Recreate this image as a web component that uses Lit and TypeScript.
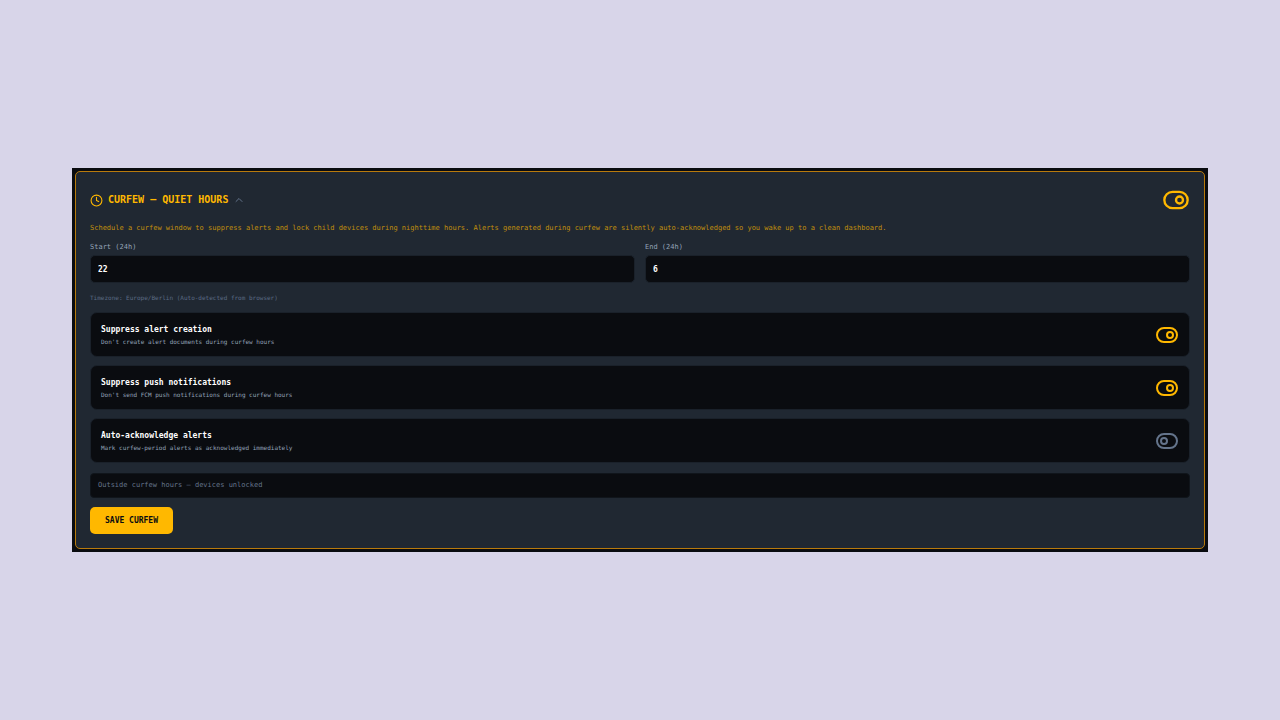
import { LitElement, html, css, svg } from "lit";
import { customElement, property, state } from "lit/decorators.js";

@customElement("toggle-switch")
class ToggleSwitch extends LitElement {
  @property({ type: Boolean, reflect: true }) on = false;
  @property() label = "";
  @property({ type: Boolean, reflect: true }) large = false;

  static styles = css`
    :host {
      display: flex;
      color: #64748b;
    }
    :host([on]) {
      color: #ffb800;
    }
    .toggle {
      display: flex;
      padding: 0;
      border: 0;
      background: none;
      color: inherit;
      cursor: pointer;
    }
    .icon {
      width: 24px;
      height: 24px;
      fill: none;
      stroke: currentColor;
      stroke-width: 2;
    }
    :host([large]) .icon {
      width: 28px;
      height: 28px;
    }
  `;

  private flip() {
    this.on = !this.on;
  }

  render() {
    return html`<button
      class="toggle"
      type="button"
      role="switch"
      aria-checked=${this.on ? "true" : "false"}
      aria-label=${this.label}
      @click=${this.flip}
    >
      <svg class="icon" viewBox="0 0 24 24" aria-hidden="true">
        <rect x="2" y="5" width="20" height="14" rx="7"></rect>
        ${svg`<circle cx=${this.on ? 15 : 9} cy="12" r="3"></circle>`}
      </svg>
    </button>`;
  }
}

interface Option {
  title: string;
  detail: string;
  on: boolean;
}

@customElement("app-root")
class AppRoot extends LitElement {
  @state() private options: Option[] = [
    {
      title: "Suppress alert creation",
      detail: "Don't create alert documents during curfew hours",
      on: true,
    },
    {
      title: "Suppress push notifications",
      detail: "Don't send FCM push notifications during curfew hours",
      on: true,
    },
    {
      title: "Auto-acknowledge alerts",
      detail: "Mark curfew-period alerts as acknowledged immediately",
      on: false,
    },
  ];

  static styles = css`
    :host {
      display: flex;
      flex-direction: column;
      justify-content: center;
      box-sizing: border-box;
      min-height: 100vh;
      padding: 0 72px;
      background: #d8d5e9;
      color: #ffffff;
      font-family: "DejaVu Sans Mono", monospace;
      font-size: 7px;
      line-height: 10px;
    }
    .frame {
      padding: 3px;
      background: #0a0c10;
    }
    .card {
      display: flex;
      flex-direction: column;
      padding: 14px;
      border: 1px solid #b87a0c;
      border-radius: 5px;
      background: #202832;
    }
    .header {
      display: flex;
      align-items: center;
      justify-content: space-between;
    }
    .heading {
      display: flex;
      align-items: center;
      gap: 5px;
      margin: 0;
      color: #ffb800;
      font-size: 10px;
      line-height: 16px;
      font-weight: 700;
    }
    .clock {
      width: 13px;
      height: 13px;
      fill: none;
      stroke: currentColor;
      stroke-width: 2;
      stroke-linecap: round;
      stroke-linejoin: round;
    }
    .chevron {
      width: 12px;
      height: 12px;
      fill: none;
      stroke: #64748b;
      stroke-width: 2;
      stroke-linecap: round;
      stroke-linejoin: round;
    }
    .intro {
      margin: 9px 0;
      color: #c08f0c;
    }
    .fields {
      display: grid;
      grid-template-columns: 1fr 1fr;
      gap: 10px;
    }
    .field {
      display: flex;
      flex-direction: column;
      gap: 3px;
      color: #94a3b8;
    }
    .input {
      box-sizing: border-box;
      width: 100%;
      height: 28px;
      padding: 0 7px;
      border: 1px solid #1a212a;
      border-radius: 5px;
      background: #0a0c10;
      color: #ffffff;
      font: inherit;
      font-size: 8px;
      font-weight: 700;
    }
    .timezone {
      margin: 10px 0 9px;
      color: #5c6b84;
      font-size: 6px;
    }
    .options {
      display: flex;
      flex-direction: column;
      gap: 8px;
    }
    .option {
      display: flex;
      align-items: center;
      justify-content: space-between;
      box-sizing: border-box;
      min-height: 45px;
      padding: 0 10px;
      border: 1px solid #1a212a;
      border-radius: 7px;
      background: #0a0c10;
    }
    .title {
      font-size: 8px;
      line-height: 14px;
      font-weight: 700;
    }
    .detail {
      color: #94a3b8;
      font-size: 6px;
    }
    .status {
      margin: 10px 0 9px;
      padding: 7px;
      border: 1px solid #10151b;
      border-radius: 4px;
      background: #0a0c10;
      color: #64748b;
      line-height: 9px;
    }
    .save {
      align-self: flex-start;
      height: 27px;
      padding: 0 15px;
      border: 0;
      border-radius: 5px;
      background: #ffb800;
      color: #0a0c10;
      font: inherit;
      font-size: 8px;
      font-weight: 700;
      cursor: pointer;
    }
  `;

  render() {
    return html`
      <main class="frame">
        <section class="card">
          <header class="header">
            <h1 class="heading">
              <svg class="clock" viewBox="0 0 24 24" aria-hidden="true">
                <circle cx="12" cy="12" r="10"></circle>
                <path d="M12 6v6l4 2"></path>
              </svg>
              <span>CURFEW — QUIET HOURS</span>
              <svg class="chevron" viewBox="0 0 24 24" aria-hidden="true">
                <path d="m18 15-6-6-6 6"></path>
              </svg>
            </h1>
            <toggle-switch large on label="Curfew"></toggle-switch>
          </header>
          <p class="intro">
            Schedule a curfew window to suppress alerts and lock child devices
            during nighttime hours. Alerts generated during curfew are silently
            auto-acknowledged so you wake up to a clean dashboard.
          </p>
          <div class="fields">
            <div class="field">
              <label for="start">Start (24h)</label>
              <input class="input" id="start" inputmode="numeric" value="22" />
            </div>
            <div class="field">
              <label for="end">End (24h)</label>
              <input class="input" id="end" inputmode="numeric" value="6" />
            </div>
          </div>
          <p class="timezone">
            Timezone: Europe/Berlin (Auto-detected from browser)
          </p>
          <div class="options">
            ${this.options.map(
              (o) => html`<div class="option">
                <div>
                  <div class="title">${o.title}</div>
                  <div class="detail">${o.detail}</div>
                </div>
                <toggle-switch ?on=${o.on} label=${o.title}></toggle-switch>
              </div>`
            )}
          </div>
          <div class="status">Outside curfew hours — devices unlocked</div>
          <button class="save" type="button">SAVE CURFEW</button>
        </section>
      </main>
    `;
  }
}
